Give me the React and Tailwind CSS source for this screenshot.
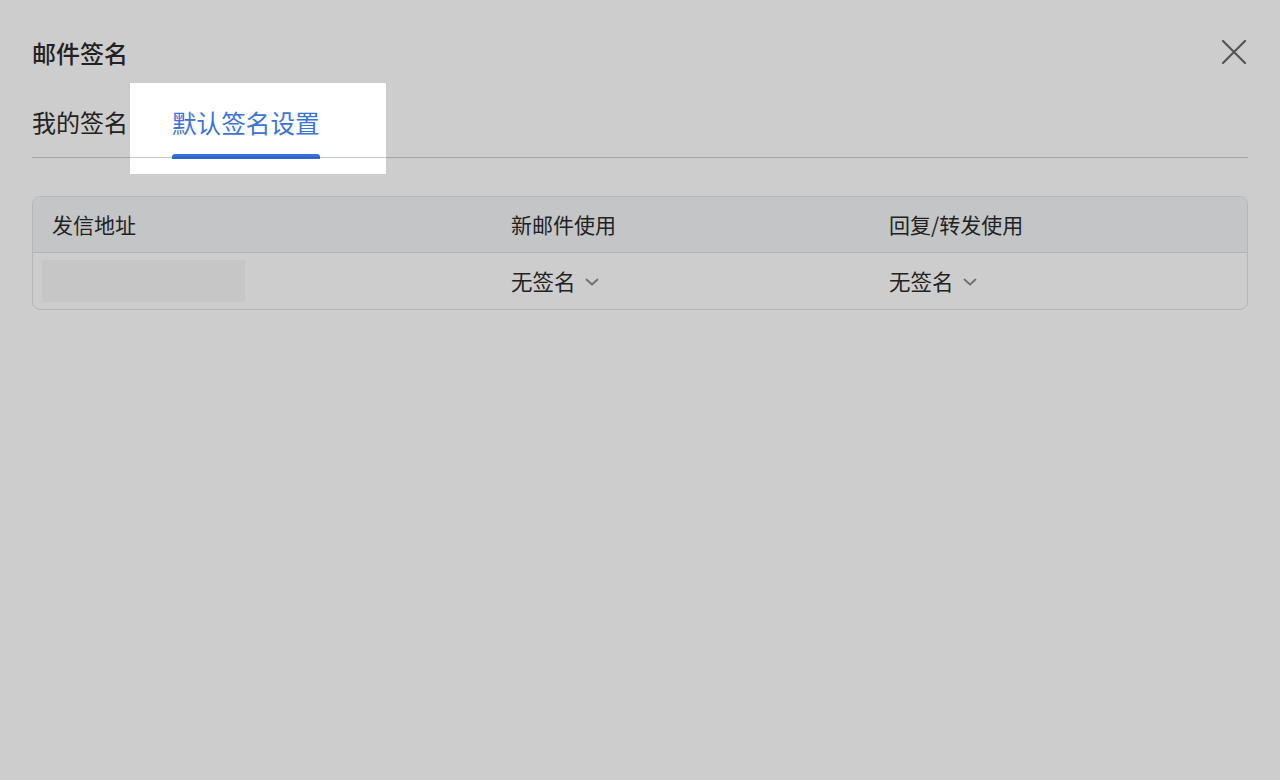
import React from "react";

function Chevron() {
  return (
    <svg width="18" height="18" viewBox="0 0 18 18" fill="none" className="ml-[7px] mt-[2px]">
      <path d="M3.5 6.5 L9 11.5 L14.5 6.5" stroke="#6f6f6f" strokeWidth="1.8" strokeLinecap="round" strokeLinejoin="round" />
    </svg>
  );
}

export default function App() {
  return (
    <div
      className="w-[1280px] h-[780px] bg-[#cdcdcd] text-[#222] overflow-hidden"
      style={{ fontFamily: '"Noto Sans CJK SC", "Noto Sans", sans-serif' }}
    >
      <div className="px-[32px] pt-[37px]">
        <div className="flex items-center justify-between h-[32px]">
          <div className="text-[24px] leading-[32px] font-medium">邮件签名</div>
          <svg width="28" height="28" viewBox="0 0 28 28" className="-mt-[2px]">
            <path d="M3 3 L25 25 M25 3 L3 25" stroke="#555" strokeWidth="2.2" strokeLinecap="round" />
          </svg>
        </div>

        <div className="relative mt-[14px] h-[75px]">
          <div className="absolute left-[98px] top-0 w-[256px] h-[91px] bg-white" />
          <div className="relative z-10 flex h-full">
            <div className="pt-[23px] text-[24px] leading-[32px] w-[98px]">我的签名</div>
            <div className="relative pl-[42px] pt-[23px]">
              <div className="text-[24.6px] leading-[32px] text-[#3b73d6]">默认签名设置</div>
              <div className="absolute left-[42px] right-0 bottom-[-1px] h-[5px] rounded-t-[3px] bg-[#3670de]" />
            </div>
          </div>
          <div className="absolute z-20 left-0 right-0 bottom-0 h-px bg-black/20" />
        </div>

        <div className="mt-[38px] rounded-[8px] border border-[#b6b6b6] overflow-hidden">
          <div className="grid grid-cols-[478px_378px_1fr] h-[56px] items-center bg-[#c4c5c7] border-b border-[#b2b2b2] text-[21px]">
            <div className="pl-[19px]">发信地址</div>
            <div>新邮件使用</div>
            <div>回复/转发使用</div>
          </div>
          <div className="grid grid-cols-[478px_378px_1fr] h-[56px] items-center text-[21.5px]">
            <div className="pl-[9px]">
              <div className="w-[203px] h-[42px] rounded-[2px] bg-[#c6c6c6]" />
            </div>
            <div className="flex items-center">
              无签名
              <Chevron />
            </div>
            <div className="flex items-center">
              无签名
              <Chevron />
            </div>
          </div>
        </div>
      </div>
    </div>
  );
}
